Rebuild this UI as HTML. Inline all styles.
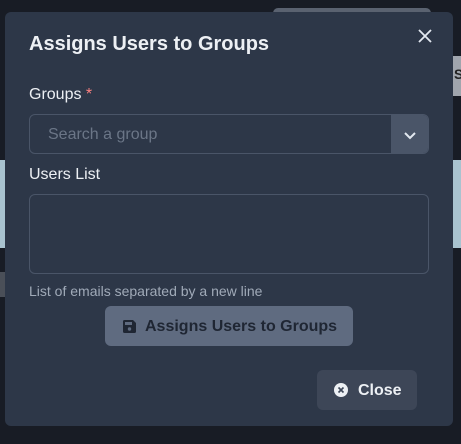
<!DOCTYPE html>
<html><head><style>
*{box-sizing:border-box;margin:0;padding:0}
body{width:461px;height:444px;background:#181c25;font-family:"Liberation Sans",sans-serif;position:relative;overflow:hidden}
.bg{position:absolute}
.modal{position:absolute;left:5px;top:12px;width:448px;height:414px;background:#2d3748;border-radius:6px}
.t{position:absolute;color:#edf0f4}
</style></head><body>
<div class="bg" style="left:273px;top:8px;width:158px;height:10px;background:#5a6270;border-radius:6px"></div>
<div class="bg" style="left:450px;top:56px;width:11px;height:40px;background:#a0a5ad"></div>
<div class="bg" style="left:453px;top:160px;width:8px;height:88px;background:#a9c3d0"></div>
<div class="bg" style="left:0;top:160px;width:6px;height:88px;background:#a9c3d0"></div>
<div class="bg" style="left:0;top:272px;width:6px;height:25px;background:#4a4f58"></div>
<div class="bg" style="left:454px;top:66px;font-size:14px;font-weight:bold;color:#222">S</div>
<div class="modal">
<div class="t" style="left:24px;top:21px;font-size:20px;font-weight:bold">Assigns Users to Groups</div>
<svg style="position:absolute;left:413px;top:17px" width="14" height="14" viewBox="0 0 14 14"><path d="M1 1L13 13M13 1L1 13" stroke="#e2e8f0" stroke-width="1.8"/></svg>
<div class="t" style="left:24px;top:74px;font-size:16px">Groups <span style="color:#fc8181">*</span></div>
<div style="position:absolute;left:24px;top:102px;width:400px;height:40px;border:1px solid #4a5568;border-radius:6px;overflow:hidden">
<div style="position:absolute;left:18px;top:11px;font-size:16px;color:#6b7687">Search a group</div>
<div style="position:absolute;right:0;top:0;width:37px;height:40px;background:#4a5568"></div>
<svg style="position:absolute;right:11px;top:15px" width="14" height="10" viewBox="0 0 14 10"><path d="M2 3L7 8L12 3" stroke="#e2e8f0" stroke-width="2" fill="none"/></svg>
</div>
<div class="t" style="left:24px;top:154px;font-size:16px">Users List</div>
<div style="position:absolute;left:24px;top:182px;width:400px;height:80px;border:1px solid #4a5568;border-radius:6px"></div>
<div style="position:absolute;left:24px;top:271px;font-size:14px;color:#a0aab8">List of emails separated by a new line</div>
<div style="position:absolute;left:100px;top:294px;width:248px;height:40px;background:#5f6b80;border-radius:6px;color:#1f2633;font-weight:bold;font-size:16px">
<svg style="position:absolute;left:18px;top:14px" width="13" height="13" viewBox="0 0 13 13"><path d="M0 1.5Q0 0 1.5 0H10L13 3V11.5Q13 13 11.5 13H1.5Q0 13 0 11.5Z" fill="#1f2633"/><rect x="2" y="2" width="7" height="3" fill="#5f6b80"/><circle cx="6.5" cy="9" r="1.7" fill="#5f6b80"/></svg>
<span style="position:absolute;left:40px;top:12px">Assigns Users to Groups</span></div>
<div style="position:absolute;left:312px;top:358px;width:100px;height:40px;background:#3d4657;border-radius:6px;color:#edf0f4;font-weight:bold;font-size:16px">
<svg style="position:absolute;left:17px;top:13px" width="14" height="14" viewBox="0 0 14 14"><circle cx="7" cy="7" r="7" fill="#edf0f4"/><path d="M4.5 4.5L9.5 9.5M9.5 4.5L4.5 9.5" stroke="#3d4657" stroke-width="1.6"/></svg>
<span style="position:absolute;left:41px;top:12px">Close</span></div>
</div>
</body></html>
